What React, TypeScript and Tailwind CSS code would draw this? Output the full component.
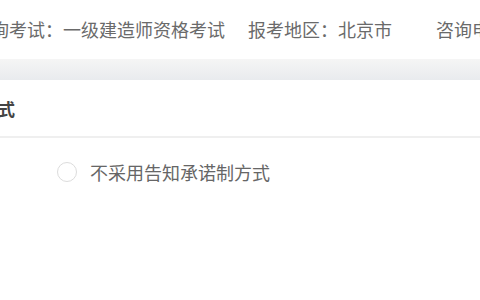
import React from "react";

export default function App() {
  const font = { fontFamily: '"Microsoft YaHei", "Noto Sans CJK SC", sans-serif' };
  return (
    <div className="w-[480px] h-[300px] overflow-hidden bg-white" style={font}>
      <div className="h-[59px] flex items-center whitespace-nowrap text-[18px] text-[#6a6a6a] -ml-[9px]">
        <span>询考试：一级建造师资格考试</span>
        <span className="ml-[23px]">报考地区：北京市</span>
        <span className="ml-[44px]">咨询电话</span>
      </div>
      <div className="h-[21px] bg-gradient-to-b from-[#f5f5f5] to-[#e9ebee]" />
      <div className="h-[58px] pt-[2px] flex items-center whitespace-nowrap border-b-2 border-[#efefef] -ml-[2px]">
        <span className="text-[17px] font-bold text-[#444]">式</span>
      </div>
      <div className="h-[68px] flex items-center pl-[57px] whitespace-nowrap">
        <span className="w-[20px] h-[20px] rounded-full border-[1.5px] border-[#dcdcdc] bg-white" />
        <span className="ml-[13px] text-[18px] text-[#666]">不采用告知承诺制方式</span>
      </div>
    </div>
  );
}
